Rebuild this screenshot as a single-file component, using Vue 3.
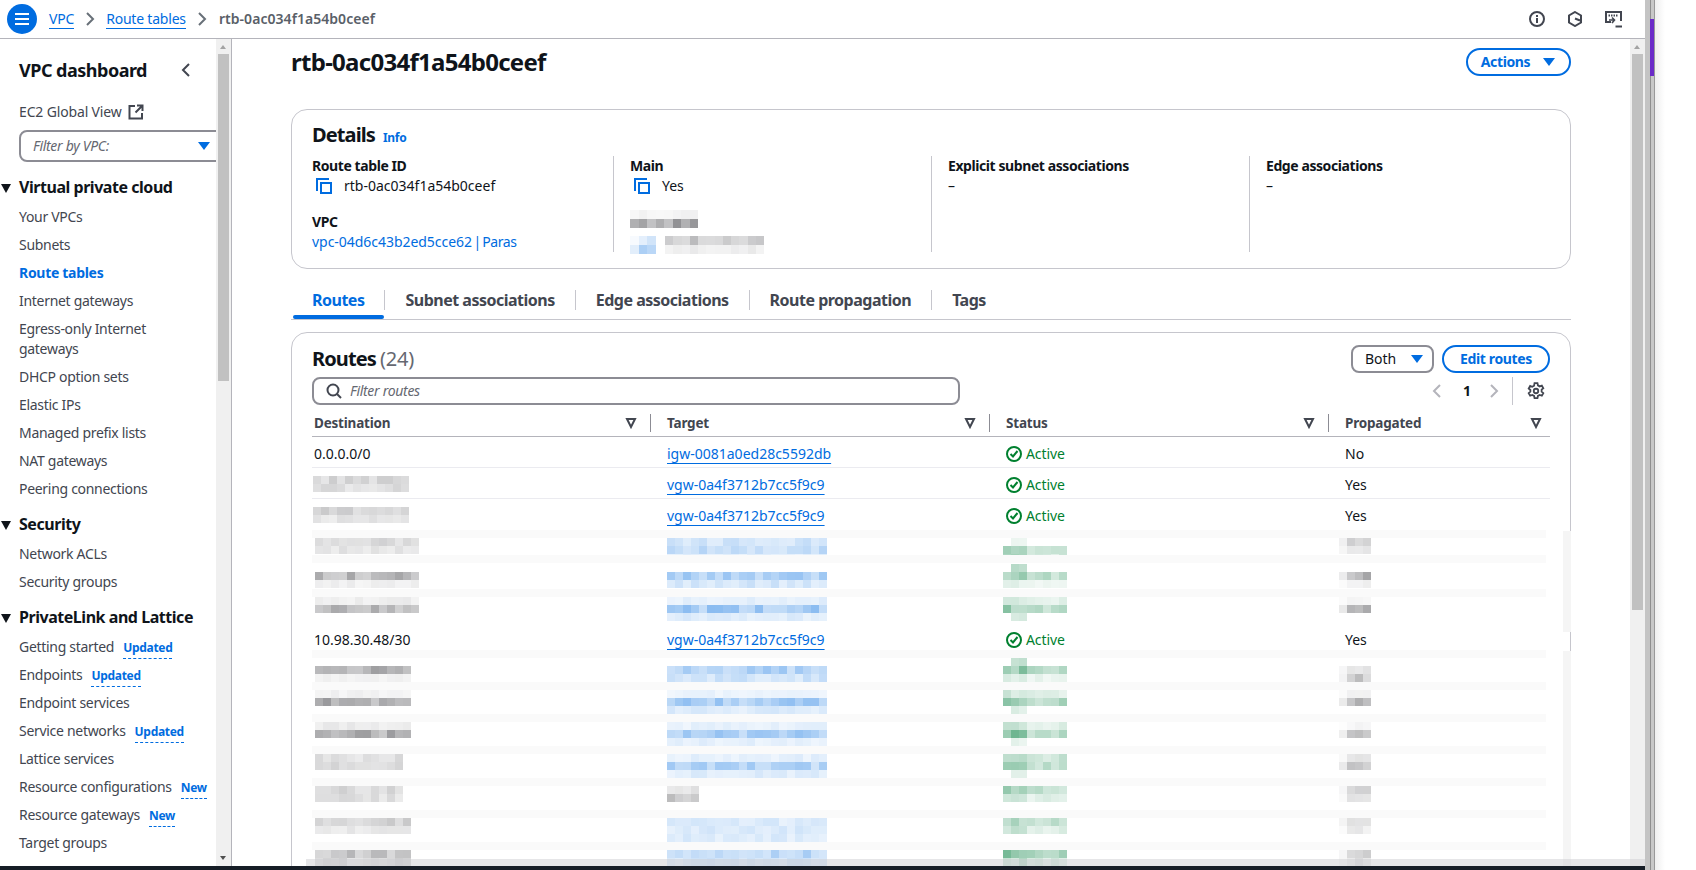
<template>
  <div class="page">
    <div class="app">
      <header class="topbar">
        <button class="menu-btn">
          <svg width="16" height="16" viewBox="0 0 16 16"><path d="M1 3h14M1 8h14M1 13h14" stroke="#fff" stroke-width="2" fill="none" /></svg>
        </button>
        <nav class="crumbs">
          <a class="crumb-link">VPC</a>
          <svg class="crumb-sep" width="16" height="16" viewBox="0 0 16 16"><path d="M5 2l6 6-6 6" stroke="#687078" stroke-width="2" fill="none" /></svg>
          <a class="crumb-link">Route tables</a>
          <svg class="crumb-sep" width="16" height="16" viewBox="0 0 16 16"><path d="M5 2l6 6-6 6" stroke="#687078" stroke-width="2" fill="none" /></svg>
          <span class="crumb-current">rtb-0ac034f1a54b0ceef</span>
        </nav>
        <div class="top-icons">
          <svg width="16" height="16" viewBox="0 0 16 16" fill="none" stroke="#424650" stroke-width="2">
            <circle cx="8" cy="8" r="7" />
            <path d="M8 7v5M8 4v2" />
          </svg>
          <svg width="16" height="16" viewBox="0 0 16 16" fill="none" stroke="#424650" stroke-width="2">
            <path d="M8 1l6 3.500v7L8 15l-6-3.500v-7z" />
            <path d="M8 7.500l5 2" />
          </svg>
          <svg width="17" height="17" viewBox="0 0 17 17" fill="none" stroke="#424650" stroke-width="2">
            <path d="M6 11H1V1h15v9" />
            <path d="M3.500 4.500h9" stroke-dasharray="1.500 1" />
            <path d="M4 9h6M7 6.500L9.500 9 7 12" stroke-width="1.600" />
            <path d="M10.500 15.500H17" />
          </svg>
        </div>
      </header>

      <div class="body">
        <aside class="sidebar">
          <div class="side-nav">
            <div class="side-head">
              <span>VPC dashboard</span>
              <svg width="16" height="16" viewBox="0 0 16 16"><path d="M11 2L5 8l6 6" stroke="#424650" stroke-width="2" fill="none" /></svg>
            </div>
            <div class="side-ec2">
              EC2 Global View
              <svg width="16" height="16" viewBox="0 0 16 16" fill="none" stroke="#424650" stroke-width="2"><path d="M7 2H1.500v12.500H14V9M9 1.500h5.500V7M14 2L7.500 8.500" /></svg>
            </div>
            <div class="side-filter">
              <span>Filter by VPC:</span>
              <svg width="14" height="14" viewBox="0 0 14 14"><path d="M1 3h12L7 11z" fill="#006ce0" /></svg>
            </div>
            <section v-for="group in navGroups" :key="group.title" class="side-group">
              <h3 class="side-title">
                <svg width="12" height="12" viewBox="0 0 12 12"><path d="M1 2h10L6 11z" fill="#0f141a" /></svg>
                {{ group.title }}
              </h3>
              <a v-for="item in group.items" :key="item.label" class="side-item" :class="{ active: item.active }">
                {{ item.label }}<span v-if="item.badge" class="side-badge">{{ item.badge }}</span>
              </a>
            </section>
          </div>
          <div class="scrollbar">
            <i class="arrow-up"></i>
            <div class="thumb side-thumb"></div>
            <i class="arrow-down"></i>
          </div>
        </aside>

        <main class="main">
          <div class="content">
            <div class="title-row">
              <h1>rtb-0ac034f1a54b0ceef</h1>
              <button class="btn actions">
                Actions
                <svg width="14" height="14" viewBox="0 0 14 14"><path d="M1 3h12L7 11z" fill="#006ce0" /></svg>
              </button>
            </div>

            <section class="card details">
              <h2>Details <a class="info">Info</a></h2>
              <div class="detail-grid">
                <div class="detail-col">
                  <div class="label">Route table ID</div>
                  <div class="value copy">
                    <svg width="16" height="16" viewBox="0 0 16 16" fill="none" stroke="#006ce0" stroke-width="2"><path d="M1 13V1h12" /><path d="M5 5h10v10H5z" /></svg>
                    rtb-0ac034f1a54b0ceef
                  </div>
                  <div class="label second">VPC</div>
                  <div class="value"><a class="plain-link">vpc-04d6c43b2ed5cce62 <span class="tight">| Paras</span></a></div>
                </div>
                <div class="detail-col">
                  <div class="label">Main</div>
                  <div class="value copy">
                    <svg width="16" height="16" viewBox="0 0 16 16" fill="none" stroke="#006ce0" stroke-width="2"><path d="M1 13V1h12" /><path d="M5 5h10v10H5z" /></svg>
                    Yes
                  </div>
                  <div class="owner-blur">
                    <Mosaic :cells="ownerLabel" />
                    <div class="owner-line">
                      <Mosaic :cells="ownerIcon" />
                      <Mosaic :cells="ownerText" />
                    </div>
                  </div>
                </div>
                <div class="detail-col">
                  <div class="label">Explicit subnet associations</div>
                  <div class="value">–</div>
                </div>
                <div class="detail-col">
                  <div class="label">Edge associations</div>
                  <div class="value">–</div>
                </div>
              </div>
            </section>

            <div class="tabs">
              <a v-for="(tab, i) in tabs" :key="tab" class="tab" :class="{ current: i === 0 }"><span>{{ tab }}</span></a>
            </div>

            <section class="card routes">
              <div class="routes-head">
                <h2>Routes <span class="count">(24)</span></h2>
                <div class="routes-actions">
                  <div class="select">
                    Both
                    <svg width="14" height="14" viewBox="0 0 14 14"><path d="M1 3h12L7 11z" fill="#006ce0" /></svg>
                  </div>
                  <button class="btn edit">Edit routes</button>
                </div>
              </div>
              <div class="filter-row">
                <div class="filter">
                  <svg width="16" height="16" viewBox="0 0 16 16" fill="none" stroke="#424650" stroke-width="2"><circle cx="7" cy="7" r="5.500" /><path d="M11 11l4 4" /></svg>
                  <span>Filter routes</span>
                </div>
                <div class="pager">
                  <svg width="16" height="16" viewBox="0 0 16 16"><path d="M11 2L5 8l6 6" stroke="#b4b4bb" stroke-width="2" fill="none" /></svg>
                  <b>1</b>
                  <svg width="16" height="16" viewBox="0 0 16 16"><path d="M5 2l6 6-6 6" stroke="#b4b4bb" stroke-width="2" fill="none" /></svg>
                  <i class="pager-line"></i>
                  <svg width="18" height="18" viewBox="0 0 16 16" fill="none" stroke="#424650" stroke-width="1.600">
                    <path d="M6.700 1h2.600l.4 2 1.600.9 1.900-.7 1.300 2.300-1.500 1.300v1.800l1.500 1.300-1.300 2.300-1.900-.7-1.600.9-.4 2H6.700l-.4-2-1.600-.9-1.900.7-1.300-2.300 1.500-1.300V7.100L1.500 5.800l1.300-2.300 1.900.7 1.600-.9z" />
                    <circle cx="8" cy="8" r="2" />
                  </svg>
                </div>
              </div>

              <div class="table">
                <div class="thead">
                  <div v-for="(col, i) in columns" :key="col" class="th">
                    <span>{{ col }}</span>
                    <svg width="12" height="12" viewBox="0 0 12 12" fill="none" stroke="#424650" stroke-width="2"><path d="M2 2h8L6 10z" /></svg>
                    <i v-if="i < 3" class="th-line"></i>
                  </div>
                </div>
                <template v-for="(row, i) in rows" :key="i">
                  <div v-if="!row.blur" class="tr" :class="{ 'no-line': row.noLine }">
                    <div v-if="row.destBlur" class="td-blur">
                      <Mosaic :cells="row.destBlur" class="dest-blur" />
                    </div>
                    <div v-else class="td">{{ row.dest }}</div>
                    <div class="td"><a class="link">{{ row.target }}</a></div>
                    <div class="td status">
                      <svg width="16" height="16" viewBox="0 0 16 16" fill="none" stroke="#00802f" stroke-width="2"><circle cx="8" cy="8" r="7" /><path d="M4.500 8l2.500 2.500L11.500 5" /></svg>
                      Active
                    </div>
                    <div class="td">{{ row.prop }}</div>
                  </div>
                  <div v-else class="tr blur">
                    <div class="band" :style="{ top: row.band + 'px' }"></div>
                    <div v-for="(m, j) in row.cells" :key="j" class="td-blur">
                      <Mosaic :cells="m.cells" :style="{ marginLeft: m.dx + 'px', marginTop: m.top + 'px' }" />
                    </div>
                  </div>
                </template>
              </div>
              <div class="edge-blur one"></div>
              <div class="edge-blur two"></div>
            </section>
          </div>

          <div class="scrollbar">
            <i class="arrow-up"></i>
            <div class="thumb main-thumb"></div>
          </div>
          <div class="bottom-fade"></div>
        </main>
      </div>
      <div class="dark-bar"></div>
    </div>
    <div class="window-edge"><div class="purple"></div></div>
  </div>
</template>

<script setup>
import { h } from 'vue'

// draws a block of the pixelated (censored) cells in the reference
const Mosaic = (props) => {
  const cells = props.cells
  return h('svg', { class: 'mosaic', width: cells.w, height: cells.h, style: { display: 'block', flex: 'none' } },
    cells.list.map((c, i) => h('rect', { key: i, x: c.x, y: c.y, width: cells.cw, height: cells.ch, fill: cells.color, 'fill-opacity': c.a, 'shape-rendering': 'crispEdges' })))
}
Mosaic.props = ['cells']

let seed = 77
function rand() {
  seed = (seed * 16807) % 2147483647
  return (seed % 1000) / 1000
}

const GRAY = 'rgb(70,70,75)'
const BLUE = 'rgb(0,108,224)'
const GREEN = 'rgb(0,125,60)'

// a negative strength means only the icon columns of that line are drawn
function mosaic(color, cols, lines, cw = 8, ch = 8, iconCols = 0) {
  const list = []
  lines.forEach((strength, y) => {
    for (let x = 0; x < cols; x++) {
      if (strength < 0 && (x === 0 || x > iconCols)) continue
      let a = Math.abs(strength) * (0.65 + 0.7 * rand())
      if (iconCols && x <= iconCols) a *= 1.5
      list.push({ x: x * cw, y: y * ch, a: a.toFixed(3) })
    }
  })
  return { w: cols * cw, h: lines.length * ch, cw, ch, color, list }
}

// the propagated column starts with a nearly empty column of cells
function fadedFirst(m) {
  m.list.forEach((c) => {
    if (c.x === 0) c.a = (c.a * 0.3).toFixed(3)
  })
  return m
}

const ownerLabel = mosaic(GRAY, 8, [0.06, 0.45], 8.500, 9)
const ownerIcon = fadedFirst(mosaic(BLUE, 3, [0.14, 0.3], 8.500, 9))
const ownerText = mosaic(GRAY, 12, [0.28, 0.09], 8.250, 9)

const navGroups = [
  {
    title: 'Virtual private cloud',
    items: [
      { label: 'Your VPCs' },
      { label: 'Subnets' },
      { label: 'Route tables', active: true },
      { label: 'Internet gateways' },
      { label: 'Egress-only Internet gateways' },
      { label: 'DHCP option sets' },
      { label: 'Elastic IPs' },
      { label: 'Managed prefix lists' },
      { label: 'NAT gateways' },
      { label: 'Peering connections' }
    ]
  },
  {
    title: 'Security',
    items: [{ label: 'Network ACLs' }, { label: 'Security groups' }]
  },
  {
    title: 'PrivateLink and Lattice',
    items: [
      { label: 'Getting started', badge: 'Updated' },
      { label: 'Endpoints', badge: 'Updated' },
      { label: 'Endpoint services' },
      { label: 'Service networks', badge: 'Updated' },
      { label: 'Lattice services' },
      { label: 'Resource configurations', badge: 'New' },
      { label: 'Resource gateways', badge: 'New' },
      { label: 'Target groups' }
    ]
  }
]

const tabs = ['Routes', 'Subnet associations', 'Edge associations', 'Route propagation', 'Tags']
const columns = ['Destination', 'Target', 'Status', 'Propagated']

function blurRow(band, top, destCols, dest, target, status, prop, opts = {}) {
  const t = opts.targetGray
    ? mosaic(GRAY, 4, target)
    : mosaic(BLUE, 20, target)
  return {
    blur: true,
    band,
    cells: [
      { dx: opts.dx || 3, top, cells: mosaic(GRAY, destCols, dest) },
      { dx: 2, top, cells: t },
      { dx: -1, top: opts.statusTop ?? top, cells: mosaic(GREEN, 8, status, 8, 8, 2) },
      { dx: -4, top, cells: fadedFirst(mosaic(GRAY, 4, prop)) }
    ]
  }
}

const vgw = 'vgw-0a4f3712b7cc5f9c9'
const rows = [
  { dest: '0.0.0.0/0', target: 'igw-0081a0ed28c5592db', prop: 'No' },
  { destBlur: mosaic(GRAY, 12, [0.2, 0.17]), target: vgw, prop: 'Yes' },
  { destBlur: mosaic(GRAY, 12, [0.24, 0.13]), target: vgw, prop: 'Yes', noLine: true },
  blurRow(0, 8, 13, [0.2, 0.14], [0.18, 0.22, 0.1], [-0.04, 0.2, 0.18], [0.2, 0.14]),
  blurRow(-6, 11, 13, [0.36, 0.08], [0.3, 0.16], [-0.14, 0.24, 0.07], [0.38, 0.08], { statusTop: 3 }),
  blurRow(-3, 5, 13, [0.09, 0.34], [0.1, 0.34, 0.12], [0.1, 0.25, -0.1], [0.06, 0.38]),
  { dest: '10.98.30.48/30', target: vgw, prop: 'Yes', noLine: true },
  blurRow(-4, 12, 12, [0.42, 0.07], [0.3, 0.18], [-0.15, 0.28, 0.08], [0.16, 0.28], { statusTop: 4 }),
  blurRow(-3, 5, 12, [0.07, 0.42], [0.08, 0.34, 0.13], [0.12, 0.28, -0.1], [0.08, 0.38]),
  blurRow(-2, 6, 12, [0.1, 0.4], [0.09, 0.32, 0.1], [0.12, 0.3, -0.08], [0.05, 0.36]),
  blurRow(-1, 7, 11, [0.16, 0.22], [0.1, 0.28, 0.12], [0.2, 0.22, -0.06], [0.12, 0.3]),
  blurRow(0, 8, 11, [0.2, 0.16], [0.14, 0.3], [0.22, 0.12], [0.2, 0.14], { targetGray: true }),
  blurRow(1, 9, 12, [0.24, 0.12], [0.13, 0.14, 0.13], [0.22, 0.13], [0.2, 0.1]),
  blurRow(2, 10, 12, [0.3, 0.2], [0.26, 0.18], [0.28, 0.16], [0.22, 0.15])
]
</script>

<style>
html,
body {
  margin: 0;
  background: #fff;
  overflow: hidden;
}
</style>

<style scoped>
.page {
  width: 1696px;
  height: 870px;
  display: flex;
  overflow: hidden;
  font-family: "Noto Sans", "Open Sans", sans-serif;
  font-size: 14px;
  line-height: 20px;
  color: #0f141a;
}

.app {
  width: 1645px;
  height: 870px;
  display: flex;
  flex-direction: column;
  flex: none;
}

.topbar {
  height: 38px;
  border-bottom: 1px solid #b4b4bb;
  display: flex;
  align-items: center;
  padding-left: 7px;
  flex: none;
}

.menu-btn {
  width: 30px;
  height: 30px;
  border: none;
  border-radius: 50%;
  background: #006ce0;
  display: flex;
  align-items: center;
  justify-content: center;
  padding: 0;
}

.crumbs {
  display: flex;
  align-items: center;
  margin-left: 12px;
}

.crumb-link {
  color: #006ce0;
  border-bottom: 1px solid #006ce0;
  line-height: 18px;
  margin-top: 1px;
  letter-spacing: -0.2px;
}

.crumb-sep {
  margin: 0 8px;
}

.crumb-current {
  color: #596068;
  font-weight: 600;
  letter-spacing: 0.05px;
  margin-left: 1px;
}

.top-icons {
  margin-left: auto;
  margin-right: 23px;
  display: flex;
  align-items: center;
  gap: 22px;
}

.body {
  flex: 1;
  display: flex;
  min-height: 0;
}

.sidebar {
  width: 231px;
  border-right: 1px solid #b4b4bb;
  display: flex;
  flex: none;
}

.side-nav {
  width: 216px;
  padding-left: 19px;
  box-sizing: border-box;
  overflow: hidden;
  color: #424650;
  letter-spacing: -0.3px;
}

.side-head {
  margin-top: 17px;
  height: 28px;
  display: flex;
  align-items: center;
  justify-content: space-between;
  font-size: 18px;
  font-weight: 700;
  color: #0f141a;
  padding-right: 22px;
  letter-spacing: -0.5px;
}

.side-ec2 {
  margin-top: 14px;
  height: 28px;
  display: flex;
  align-items: center;
  gap: 6px;
  letter-spacing: -0.15px;
}

.side-filter {
  margin-top: 4px;
  width: 215px;
  height: 32px;
  box-sizing: border-box;
  border: 2px solid #8c8c94;
  border-radius: 8px;
  display: flex;
  align-items: center;
  justify-content: space-between;
  padding: 0 21px 0 12px;
  font-style: italic;
  color: #656871;
  white-space: nowrap;
}

.side-group {
  margin-top: 8px;
}

.side-filter + .side-group {
  margin-top: 12px;
}

.side-title {
  margin: 0 0 3px;
  height: 26px;
  display: flex;
  align-items: center;
  font-size: 16px;
  font-weight: 700;
  color: #0f141a;
  position: relative;
  letter-spacing: -0.46px;
}

.side-title svg {
  position: absolute;
  left: -19px;
  top: 8px;
}

.side-item {
  display: block;
  padding: 4px 8px 4px 0;
}

.side-item.active {
  color: #006ce0;
  font-weight: 700;
}

.side-badge {
  margin-left: 9px;
  color: #006ce0;
  font-size: 12px;
  font-weight: 700;
  line-height: 1;
  border-bottom: 1px dashed #006ce0;
  padding-bottom: 2px;
}

.scrollbar {
  width: 15px;
  flex: none;
  background: #f0f0f0;
  position: relative;
}

.thumb {
  width: 11px;
  margin-left: 2px;
  background: #c1c1c1;
}

.side-thumb {
  margin-top: 15px;
  height: 327px;
}

.main-thumb {
  margin-top: 15px;
  height: 556px;
}

.arrow-up {
  position: absolute;
  top: 6px;
  left: 4px;
  border: 3.500px solid transparent;
  border-top: none;
  border-bottom: 4px solid #a3a3a3;
}

.arrow-down {
  position: absolute;
  bottom: 6px;
  left: 4px;
  border: 3.500px solid transparent;
  border-bottom: none;
  border-top: 4px solid #505050;
}

.main {
  flex: 1;
  display: flex;
  position: relative;
  min-width: 0;
}

.content {
  flex: 1;
  overflow: hidden;
  padding-left: 59px;
  box-sizing: border-box;
  min-width: 0;
}

.title-row {
  width: 1280px;
  padding-top: 9px;
  height: 28px;
  display: flex;
  align-items: center;
  justify-content: space-between;
}

h1 {
  margin: 0;
  font-size: 24px;
  font-weight: 700;
  line-height: 30px;
  letter-spacing: -0.72px;
}

.btn {
  height: 28px;
  box-sizing: border-box;
  border: 2px solid #006ce0;
  border-radius: 20px;
  background: #fff;
  color: #006ce0;
  font: 700 14px/20px "Noto Sans", sans-serif;
  letter-spacing: -0.35px;
  padding: 0;
  display: flex;
  align-items: center;
  justify-content: center;
}

.actions {
  width: 105px;
  gap: 12px;
}

.edit {
  width: 108px;
}

.card {
  width: 1280px;
  box-sizing: border-box;
  border: 1px solid #c6c6cd;
  border-radius: 16px;
  padding-left: 20px;
}

.details {
  margin-top: 33px;
  height: 160px;
}

h2 {
  margin: 0;
  font-size: 20px;
  font-weight: 700;
  line-height: 26px;
  letter-spacing: -0.9px;
  height: 26px;
  display: flex;
  align-items: baseline;
  gap: 4px;
}

.details h2 {
  padding-top: 12px;
  gap: 8px;
}

.info {
  font-size: 12px;
  color: #006ce0;
  letter-spacing: -0.3px;
}

.detail-grid {
  margin-top: 8px;
  display: grid;
  grid-template-columns: repeat(4, 302px);
  column-gap: 16px;
}

.detail-col {
  height: 96px;
  border-right: 1px solid #c6c6cd;
}

.detail-col:last-child {
  border-right: none;
}

.label {
  font-weight: 700;
  height: 20px;
  letter-spacing: -0.42px;
}

.label.second {
  margin-top: 16px;
}

.value.copy {
  display: flex;
  align-items: center;
  gap: 12px;
  padding-left: 4px;
}

.plain-link {
  color: #006ce0;
  word-spacing: -2px;
  letter-spacing: -0.04px;
}

.tight {
  letter-spacing: -0.4px;
}

.owner-blur {
  margin-top: 14px;
}

.owner-line {
  display: flex;
  margin-top: 8px;
  gap: 9px;
}

.tabs {
  margin-top: 21px;
  width: 1280px;
  height: 30px;
  box-sizing: border-box;
  border-bottom: 1px solid #c6c6cd;
  display: flex;
  font-size: 16px;
  font-weight: 700;
  color: #424650;
  padding-left: 1px;
  letter-spacing: -0.5px;
}

.tab {
  position: relative;
  height: 20px;
  padding: 0 20px;
  border-right: 1px solid #c6c6cd;
}

.tab:last-child {
  border-right: none;
}

.tab.current {
  color: #006ce0;
}

.tab.current::after {
  content: "";
  position: absolute;
  left: 1px;
  right: 0;
  top: 25px;
  height: 4px;
  border-radius: 4px;
  background: #006ce0;
}

.routes {
  margin-top: 12px;
  height: 600px;
  position: relative;
  padding-right: 20px;
}

.routes-head {
  padding-top: 12px;
  display: flex;
  align-items: center;
  justify-content: space-between;
}

.count {
  font-weight: 400;
  color: #656871;
  letter-spacing: -0.2px;
}

.routes-actions {
  display: flex;
  gap: 8px;
}

.select {
  width: 83px;
  height: 28px;
  box-sizing: border-box;
  border: 2px solid #8c8c94;
  border-radius: 8px;
  display: flex;
  align-items: center;
  padding-left: 12px;
  gap: 14px;
}

.filter-row {
  margin-top: 4px;
  display: flex;
  justify-content: space-between;
  height: 28px;
}

.filter {
  width: 648px;
  box-sizing: border-box;
  border: 2px solid #8c8c94;
  border-radius: 8px;
  display: flex;
  align-items: center;
  padding-left: 12px;
  gap: 8px;
  font-style: italic;
  color: #656871;
  letter-spacing: -0.3px;
}

.pager {
  display: flex;
  align-items: center;
}

.pager b {
  margin: 0 15px 0 18px;
}

.pager-line {
  width: 1px;
  height: 28px;
  background: #c6c6cd;
  margin: 0 14px 0 10px;
}

.pager svg:last-child {
  margin-right: 5px;
}

.thead,
.tr {
  display: grid;
  grid-template-columns: 353px 339px 339px 207px;
}

.thead {
  height: 32px;
  box-sizing: border-box;
  border-bottom: 1px solid #b4b4bb;
  padding-top: 9px;
}

.th {
  height: 18px;
  display: flex;
  align-items: center;
  padding-left: 2px;
  font-weight: 700;
  font-size: 13.500px;
  color: #424650;
  letter-spacing: -0.2px;
}

.th span {
  flex: 1;
}

.th svg {
  margin-right: 13px;
}

.th:last-child svg {
  margin-right: 8px;
}

.th-line {
  width: 1px;
  height: 18px;
  background: #8c8c94;
  margin-right: 14px;
}

.tr {
  height: 31px;
  box-sizing: border-box;
  border-bottom: 1px solid #ebebf0;
  position: relative;
  align-items: start;
  padding-top: 7px;
}

.tr.blur {
  border-bottom: none;
  padding-top: 0;
}

.tr.no-line {
  border-bottom: none;
}

.td {
  padding-left: 2px;
  height: 20px;
}

.td-blur {
  position: relative;
  height: 24px;
}

.dest-blur {
  margin: 1px 0 0 1px;
}

.band {
  position: absolute;
  left: 0;
  right: 4px;
  height: 8px;
  background: #fafafa;
}

.link {
  color: #006ce0;
  text-decoration: underline;
  text-underline-offset: 4px;
}

.status {
  display: flex;
  align-items: center;
  gap: 4px;
  color: #00802f;
  letter-spacing: -0.1px;
}

.edge-blur {
  position: absolute;
  right: -1px;
  width: 8px;
  background: #f5f5f5;
}

.edge-blur.one {
  top: 198px;
  height: 101px;
}

.edge-blur.two {
  top: 318px;
  height: 240px;
}

.bottom-fade {
  position: absolute;
  left: 74px;
  right: 0;
  bottom: 0;
  height: 7px;
  background: rgba(205, 205, 210, 0.5);
}

.dark-bar {
  height: 4px;
  background: #161d26;
  flex: none;
}

.window-edge {
  flex: 1;
  position: relative;
  background: linear-gradient(90deg, #c4c4c4 0 5px, #8f8f8f 5px 6px, #c8c8c8 6px 9px, #999 9px 10px, #efefef 10px, #fff 20px);
}

.purple {
  position: absolute;
  left: 5px;
  top: 19px;
  width: 4px;
  height: 57px;
  background: #6b2bc8;
}
</style>
